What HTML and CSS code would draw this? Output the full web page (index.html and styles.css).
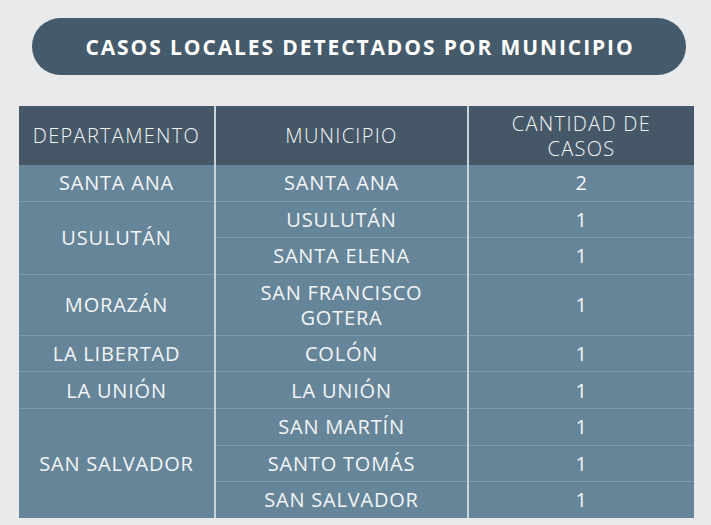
FILE: index.html
```html
<!DOCTYPE html>
<html lang="es">
<head>
<meta charset="utf-8">
<link rel="stylesheet" href="styles.css">
</head>
<body>
<div class="page">
  <div class="title">CASOS LOCALES DETECTADOS POR MUNICIPIO</div>
  <table class="tbl">
    <colgroup>
      <col class="c1"><col class="c2"><col class="c3">
    </colgroup>
    <thead>
      <tr><th>DEPARTAMENTO</th><th>MUNICIPIO</th><th>CANTIDAD DE<br>CASOS</th></tr>
    </thead>
    <tbody>
      <tr><td>SANTA ANA</td><td>SANTA ANA</td><td>2</td></tr>
      <tr><td rowspan="2">USULUTÁN</td><td>USULUTÁN</td><td>1</td></tr>
      <tr><td>SANTA ELENA</td><td>1</td></tr>
      <tr class="tall"><td>MORAZÁN</td><td>SAN FRANCISCO<br>GOTERA</td><td>1</td></tr>
      <tr><td>LA LIBERTAD</td><td>COLÓN</td><td>1</td></tr>
      <tr><td>LA UNIÓN</td><td>LA UNIÓN</td><td>1</td></tr>
      <tr><td rowspan="3">SAN SALVADOR</td><td>SAN MARTÍN</td><td>1</td></tr>
      <tr><td>SANTO TOMÁS</td><td>1</td></tr>
      <tr><td>SAN SALVADOR</td><td>1</td></tr>
    </tbody>
  </table>
</div>
</body>
</html>
```
FILE: styles.css
```css
html, body {
  margin: 0;
  padding: 0;
  background: #e9eaec;
}
.page {
  width: 711px;
  height: 525px;
  padding-top: 18px;
  box-sizing: border-box;
  font-family: "Open Sans", "DejaVu Sans", sans-serif;
}
.title {
  margin: 0 25px 0 32px;
  height: 57px;
  border-radius: 29px;
  background: #455a6a;
  color: #ffffff;
  font-weight: 700;
  font-size: 21px;
  letter-spacing: 1.9px;
  display: flex;
  align-items: center;
  justify-content: center;
  padding-left: 2px;
}
.tbl {
  margin: 31px 0 0 19px;
  width: 675px;
  border-collapse: collapse;
  table-layout: fixed;
  color: #f2f5f7;
}
.c1 { width: 196px; }
.c2 { width: 253px; }
.c3 { width: 226px; }
.tbl th {
  background: #465867;
  height: 59px;
  font-weight: 300;
  font-size: 20px;
  letter-spacing: 1.3px;
  line-height: 25px;
  padding: 0;
  text-align: center;
  vertical-align: middle;
}
.tbl td {
  background: #678598;
  height: 35.6px;
  font-size: 20px;
  letter-spacing: 0.8px;
  line-height: 25px;
  padding: 0;
  text-align: center;
  vertical-align: middle;
  border-top: 1px solid #7f9aac;
}
.tbl tbody tr:first-child td { border-top: none; }
.tbl tr.tall td { height: 60px; }
.tbl th + th, .tbl td + td { border-left: 2px solid #c6d4dd; }
.tbl td[rowspan] { border-right: 2px solid #c6d4dd; }
```
